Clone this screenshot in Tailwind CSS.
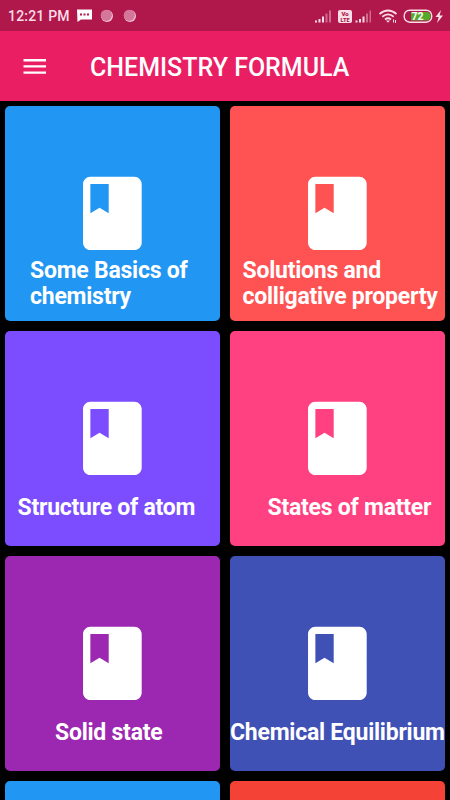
<!DOCTYPE html>
<html lang="en">
<head>
  <meta charset="UTF-8" />
  <meta name="viewport" content="width=device-width, initial-scale=1.0"/>
  <title>Chemistry Formula</title>
  <script src="https://cdn.jsdelivr.net/npm/@tailwindcss/browser@4"></script>
</head>
<body class="bg-black font-['Roboto',sans-serif] text-white h-screen overflow-hidden">

  <!-- Status Bar -->
  <div class="flex items-center justify-between h-[31px] bg-[#b0174b] pl-2 pr-1 text-[#fbdde8]">
    <div class="flex items-center">
      <span class="w-[69px] text-[14px] font-medium leading-4 tracking-[0.2px] whitespace-nowrap">12:21 PM</span>
      <svg class="w-4 h-[15px]" viewBox="0 0 16 15">
        <path fill="#fff" d="M0 1.500h15v10H4L.5 14z"/>
        <path fill="#b0174b" d="M3 5.500h2v2H3zM6.500 5.500h2v2h-2zM10 5.500h2v2h-2z"/>
      </svg>
      <svg class="w-[13px] h-[13px] ml-[7px]" viewBox="0 0 13 13">
        <circle cx="7" cy="7" r="6" fill="#f3c3d3"/>
        <circle cx="6.300" cy="6.300" r="5.600" fill="#d4779a"/>
      </svg>
      <svg class="w-[13px] h-[13px] ml-[10px]" viewBox="0 0 13 13">
        <circle cx="7" cy="7" r="6" fill="#f3c3d3"/>
        <circle cx="6.300" cy="6.300" r="5.600" fill="#d4779a"/>
      </svg>
    </div>
    <svg class="w-[132px] h-5" viewBox="0 0 132 20">
      <!-- signal 1 -->
      <path fill="#fbdde8" d="M1 14.500h2v2H1zM4.500 13h2v3.500h-2zM8 10.500h2v6H8z"/>
      <path fill="#cf6b90" d="M11.500 7.500h2v9h-2zM15 4.500h2v12h-2z"/>
      <!-- VoLTE -->
      <rect x="24" y="4" width="14" height="13" rx="2" fill="#fbdde8"/>
      <text x="31" y="9.800" text-anchor="middle" font-size="6" font-weight="900" fill="#a51a49">Vo<tspan x="31" dy="6" font-size="5.500">LTE</tspan></text>
      <!-- signal 2 -->
      <path fill="#fbdde8" d="M41.500 14.500h2v2h-2zM45 13h2v3.500h-2zM48.500 10.500h2v6h-2z"/>
      <path fill="#cf6b90" d="M52 7.500h2v9h-2zM55.500 4.500h1.500v12h-1.500z"/>
      <!-- wifi -->
      <g fill="none" stroke="#fbdde8" stroke-width="1.800">
        <path d="M65.500 8q8.500-7 17 0M68.300 10.800q5.700-4.800 11.400 0M71 13.500q3-2.500 6 0"/>
      </g>
      <path fill="#fbdde8" d="M72 14.500h4l-2 2.300z"/>
      <path stroke="#fbdde8" stroke-width="1" d="M79.500 13.500v3M81.500 14v3"/>
      <!-- battery -->
      <rect x="90.200" y="4.200" width="27.500" height="12" rx="5.500" fill="none" stroke="#fbdde8" stroke-width="1.400"/>
      <path fill="#56a82c" d="M97 6h15.500a4.200 4.200 0 0 1 0 8.400H97z"/>
      <text x="103.500" y="14" text-anchor="middle" font-size="10.500" font-weight="700" fill="#fff">72</text>
      <path fill="#fbdde8" d="M127 4l-5.500 7h3.200l-1.700 6 6-7.500h-3.400z"/>
    </svg>
  </div>

  <!-- App Bar -->
  <div class="flex items-center h-[70px] bg-[#e91e63] pl-[23px] pt-px">
    <svg class="w-6 h-[17px] shrink-0" viewBox="0 0 24 17">
      <path fill="#fff" d="M.5 1h22.500v2.400H.500zM.5 7.200h22.500v2.400H.500zM.5 13.400h22.500v2.400H.500z"/>
    </svg>
    <h1 class="ml-[43px] pt-0.5 text-[25px] font-medium leading-8 whitespace-nowrap">CHEMISTRY FORMULA</h1>
  </div>

  <!-- Chapters -->
  <svg class="hidden">
    <symbol id="book" viewBox="-0.1 -0.1 24 24">
      <path d="M18 2H6c-1.100 0-2 .9-2 2v16c0 1.100.9 2 2 2h12c1.100 0 2-.9 2-2V4c0-1.100-.9-2-2-2zM6 4h5v8l-2.500-1.500L6 12V4z"/>
    </symbol>
  </svg>
  <div class="grid grid-cols-2 gap-[10px] px-[5px] pt-[5px] text-[23px] tracking-[-0.24px] font-bold leading-[26px] whitespace-nowrap">
    <div class="flex flex-col h-[215px] rounded-[5px] bg-[#2196f3] pt-[63px]">
      <svg class="w-[88px] h-[88px] ml-[63px] shrink-0 fill-white"><use href="#book"/></svg>
      <div class="flex items-center h-[54px] pl-[25px]"><p>Some Basics of<br>chemistry</p></div>
    </div>
    <div class="flex flex-col h-[215px] rounded-[5px] bg-[#ff5252] pt-[63px]">
      <svg class="w-[88px] h-[88px] ml-[63px] shrink-0 fill-white"><use href="#book"/></svg>
      <div class="flex items-center h-[54px] pl-[12.5px]"><p>Solutions and<br>colligative property</p></div>
    </div>
    <div class="flex flex-col h-[215px] rounded-[5px] bg-[#7c4dff] pt-[63px]">
      <svg class="w-[88px] h-[88px] ml-[63px] shrink-0 fill-white"><use href="#book"/></svg>
      <div class="flex items-center h-[52px] pl-[12.5px]">Structure of atom</div>
    </div>
    <div class="flex flex-col h-[215px] rounded-[5px] bg-[#ff4081] pt-[63px]">
      <svg class="w-[88px] h-[88px] ml-[63px] shrink-0 fill-white"><use href="#book"/></svg>
      <div class="flex items-center h-[52px] pl-[37.5px]">States of matter</div>
    </div>
    <div class="flex flex-col h-[215px] rounded-[5px] bg-[#9c27b0] pt-[63px]">
      <svg class="w-[88px] h-[88px] ml-[63px] shrink-0 fill-white"><use href="#book"/></svg>
      <div class="flex items-center h-[52px] pl-[50px]">Solid state</div>
    </div>
    <div class="flex flex-col h-[215px] rounded-[5px] bg-[#3f51b5] pt-[63px]">
      <svg class="w-[88px] h-[88px] ml-[63px] shrink-0 fill-white"><use href="#book"/></svg>
      <div class="flex items-center h-[52px]">Chemical Equilibrium</div>
    </div>
    <div class="h-[19px] rounded-t-[5px] bg-[#2196f3]"></div>
    <div class="h-[19px] rounded-t-[5px] bg-[#f44336]"></div>
  </div>

</body>
</html>
